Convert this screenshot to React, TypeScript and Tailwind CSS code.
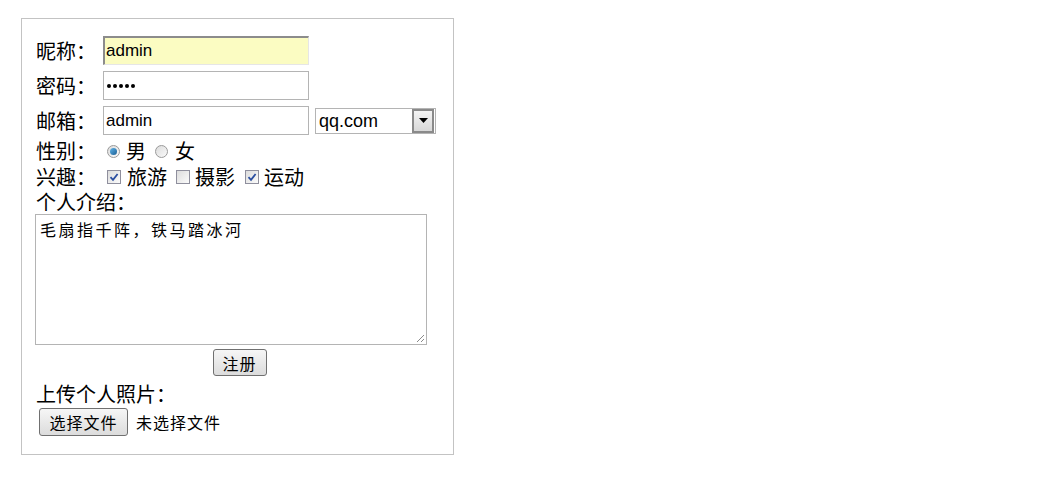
const cjk = "font-['Noto_Sans_CJK_SC','Microsoft_YaHei',sans-serif]"
const latin = "font-['Liberation_Sans',Arial,sans-serif]"

function Radio({ checked }: { checked?: boolean }) {
  return (
    <span className="inline-flex h-[13px] w-[13px] items-center justify-center rounded-full border border-[#9a9a9a] bg-gradient-to-br from-[#dcdcdc] to-[#fafafa]">
      {checked && <span className="h-[7px] w-[7px] rounded-full bg-gradient-to-br from-[#5fb4e8] to-[#1a5f95]" />}
    </span>
  )
}

function Check({ checked }: { checked?: boolean }) {
  return (
    <span className="inline-flex h-[14px] w-[14px] items-center justify-center border border-[#8f8f9d] bg-gradient-to-br from-[#dcdcdc] to-[#fbfbfb]">
      {checked && (
        <svg width="10" height="10" viewBox="0 0 10 10">
          <path d="M1.5 5.2 L4 7.8 L8.6 2" fill="none" stroke="#2a4ea0" strokeWidth="1.8" />
        </svg>
      )}
    </span>
  )
}

export default function App() {
  return (
    <div className="pl-[21px] pt-[18px] bg-white min-h-[483px]">
      <div className={`w-[433px] h-[437px] border border-[#c3c3c3] pl-[14px] pr-[14px] pt-[17px] text-[20px] leading-[24px] text-black ${cjk}`}>
        {/* 昵称 */}
        <div className="flex h-[29px] items-center">
          <span className="w-[67px]">昵称：</span>
          <div className={`flex h-[29px] w-[206px] items-center border-t-2 border-l-2 border-b border-r border-t-[#8c8c8c] border-l-[#8c8c8c] border-b-[#e6e6e6] border-r-[#e6e6e6] bg-[#fbfcc2] pl-[1px] text-[17px] ${latin}`}>
            admin
          </div>
        </div>

        {/* 密码 */}
        <div className="mt-[6px] flex h-[29px] items-center">
          <span className="w-[67px]">密码：</span>
          <div className="flex h-[29px] w-[206px] items-center gap-[2px] border border-[#b4b4b4] pl-[3px]">
            {[0, 1, 2, 3, 4].map((i) => (
              <span key={i} className="h-[4px] w-[4px] rounded-full bg-black" />
            ))}
          </div>
        </div>

        {/* 邮箱 */}
        <div className="mt-[6px] flex h-[29px] items-center">
          <span className="w-[67px]">邮箱：</span>
          <div className={`flex h-[29px] w-[206px] items-center border border-[#b4b4b4] pl-[2px] text-[17px] ${latin}`}>
            admin
          </div>
          <div className={`ml-[6px] flex h-[26px] w-[121px] items-center justify-between border border-[#b4b4b4] pl-[3px] pr-[1px] text-[18px] ${latin}`}>
            <span>qq.com</span>
            <span className="flex h-[24px] w-[22px] items-center justify-center border-2 border-[#8a8a8a] bg-gradient-to-b from-[#f4f4f4] to-[#d8d8d8]">
              <svg width="9" height="5" viewBox="0 0 9 5">
                <path d="M0 0 H9 L4.5 5 Z" fill="#000" />
              </svg>
            </span>
          </div>
        </div>

        {/* 性别 */}
        <div className="mt-[3px] flex h-[26px] items-center">
          <span className="w-[71px]">性别：</span>
          <Radio checked />
          <span className="ml-[6px]">男</span>
          <span className="ml-[9px] flex"><Radio /></span>
          <span className="ml-[7px]">女</span>
        </div>

        {/* 兴趣 */}
        <div className="flex h-[26px] items-center">
          <span className="w-[71px]">兴趣：</span>
          <Check checked />
          <span className="ml-[6px]">旅游</span>
          <span className="ml-[9px] flex"><Check /></span>
          <span className="ml-[5px]">摄影</span>
          <span className="ml-[10px] flex"><Check checked /></span>
          <span className="ml-[5px]">运动</span>
        </div>

        {/* 个人介绍 */}
        <div className="flex h-[24px] items-center">个人介绍：</div>
        <div className="relative -ml-[1px] h-[131px] w-[392px] border border-[#b4b4b4] px-[4px] pt-[4px] text-[16px] leading-[20px] tracking-[2.5px]">
          毛扇指千阵，铁马踏冰河
          <svg className="absolute bottom-[1px] right-[1px]" width="10" height="10" viewBox="0 0 10 10">
            <path d="M9 2 L2 9 M9 6 L6 9" stroke="#8a8a8a" strokeWidth="1" />
          </svg>
        </div>

        <div className="mt-[4px] flex justify-center pl-[4px]">
          <button className="h-[27px] w-[54px] rounded-[3px] border border-[#707070] bg-gradient-to-b from-[#f6f6f6] to-[#dcdcdc] text-[16px] leading-none tracking-[1px]">
            注册
          </button>
        </div>

        <div className="mt-[6px] flex h-[24px] items-center">上传个人照片：</div>
        <div className="mt-[2px] flex h-[28px] items-center pl-[3px]">
          <button className="h-[28px] w-[89px] rounded-[3px] border border-[#707070] bg-gradient-to-b from-[#f6f6f6] to-[#dcdcdc] text-[16px] leading-none tracking-[1px]">
            选择文件
          </button>
          <span className="ml-[8px] text-[16px] leading-none tracking-[1px]">未选择文件</span>
        </div>
      </div>
    </div>
  )
}
